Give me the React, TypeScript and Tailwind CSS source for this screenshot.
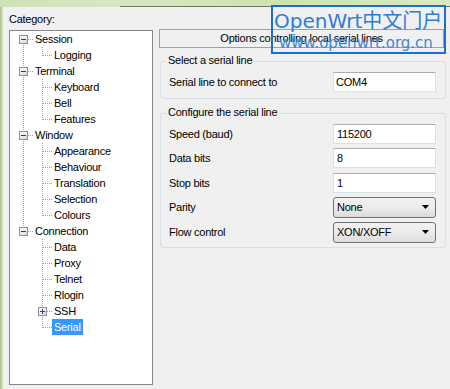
import React from 'react';

type Node = { label: string; level: 0 | 1; expander?: '-' | '+'; selected?: boolean };

const tree: Node[] = [
    { label: 'Session', level: 0, expander: '-' },
    { label: 'Logging', level: 1 },
    { label: 'Terminal', level: 0, expander: '-' },
    { label: 'Keyboard', level: 1 },
    { label: 'Bell', level: 1 },
    { label: 'Features', level: 1 },
    { label: 'Window', level: 0, expander: '-' },
    { label: 'Appearance', level: 1 },
    { label: 'Behaviour', level: 1 },
    { label: 'Translation', level: 1 },
    { label: 'Selection', level: 1 },
    { label: 'Colours', level: 1 },
    { label: 'Connection', level: 0, expander: '-' },
    { label: 'Data', level: 1 },
    { label: 'Proxy', level: 1 },
    { label: 'Telnet', level: 1 },
    { label: 'Rlogin', level: 1 },
    { label: 'SSH', level: 1, expander: '+' },
    { label: 'Serial', level: 1, selected: true },
];

const rows = [
    { label: 'Speed (baud)', value: '115200', kind: 'input', gap: 'mt-0' },
    { label: 'Data bits', value: '8', kind: 'input', gap: 'mt-[4px]' },
    { label: 'Stop bits', value: '1', kind: 'input', gap: 'mt-[5px]' },
    { label: 'Parity', value: 'None', kind: 'select', gap: 'mt-[4px]' },
    { label: 'Flow control', value: 'XON/XOFF', kind: 'select', gap: 'mt-[4px]' },
];

// centre of a tree row, relative to the list box content
const cy = (i: number) => 8 + 16 * i;

function TreeLines() {
    const dot = { stroke: '#a0a0a0', strokeDasharray: '1 1', shapeRendering: 'crispEdges' as const };
    const groups = [
        { parent: 0, last: 1 },
        { parent: 2, last: 5 },
        { parent: 6, last: 11 },
        { parent: 12, last: 18 },
    ];
    return (
        <svg className="absolute left-0 top-0" width={142} height={353}>
            <defs>
                <linearGradient id="box" x1="0" y1="0" x2="1" y2="1">
                    <stop offset="0" stopColor="#ffffff" />
                    <stop offset="1" stopColor="#d8d8d8" />
                </linearGradient>
            </defs>
            {/* top-level spine */}
            <line x1={13.5} y1={cy(0)} x2={13.5} y2={cy(12)} {...dot} />
            {groups.map(g => (
                <line key={g.parent} x1={32.5} y1={cy(g.parent) + 8} x2={32.5} y2={cy(g.last) + 1} {...dot} />
            ))}
            {tree.map((n, i) => {
                const y = cy(i) + 0.5;
                if (n.level === 0) {
                    return (
                        <g key={n.label}>
                            <line x1={18} y1={y} x2={24} y2={y} {...dot} />
                            <rect x={9.5} y={y - 4} width={8} height={8} fill="url(#box)" stroke="#919191" shapeRendering="crispEdges" />
                            <line x1={11} y1={y} x2={16} y2={y} stroke="#2c3f66" shapeRendering="crispEdges" />
                        </g>
                    );
                }
                return (
                    <g key={n.label}>
                        <line x1={n.expander ? 37 : 33} y1={y} x2={42} y2={y} {...dot} />
                        {n.expander && (
                            <>
                                <rect x={28.5} y={y - 4} width={8} height={8} fill="url(#box)" stroke="#919191" shapeRendering="crispEdges" />
                                <line x1={30} y1={y} x2={35} y2={y} stroke="#2c4a8a" shapeRendering="crispEdges" />
                                <line x1={32.5} y1={y - 2.5} x2={32.5} y2={y + 2.5} stroke="#2c4a8a" shapeRendering="crispEdges" />
                            </>
                        )}
                    </g>
                );
            })}
        </svg>
    );
}

function ComboArrow() {
    return (
        <svg width={8} height={5} viewBox="0 0 8 5">
            <path d="M0 0 H7 L3.5 4 Z" fill="#000" />
        </svg>
    );
}

export default function App() {
    return (
        <div className="w-[450px] h-[389px] bg-[#f0f0f0] relative overflow-hidden font-['Liberation_Sans',Arial,sans-serif] text-[11px] tracking-[-0.25px] text-black">
            {/* title bar edge */}
            <div className="flex h-[7px]">
                <div className="w-[120px] bg-gradient-to-r from-[#cfe2b6] to-[#d6e8c1]" />
                <div className="flex-1 bg-gradient-to-r from-[#d6e8c1] via-[#cde3b2] to-[#d8eac4] border-b border-[#6e7b62]" />
            </div>

            <div className="flex h-[382px]">
                <div className="w-[3px] bg-gradient-to-r from-[#a7bf86] to-[#dbe7cc]" />

                {/* category tree */}
                <div className="ml-[6px] w-[144px] flex flex-col">
                    <div className="h-[23px] pt-[6px] leading-[13px]">Category:</div>
                    <div className="relative h-[355px] bg-white border border-[#828790]">
                        <TreeLines />
                        <div className="relative flex flex-col">
                            {tree.map(n => (
                                <div key={n.label} className="h-[16px] flex">
                                    <span
                                        className={
                                            (n.level === 0 ? 'ml-[23px] ' : 'ml-[42px] ') +
                                            'px-[2px] leading-[16px] ' +
                                            (n.selected ? 'bg-[#3399ff] text-white' : '')
                                        }
                                    >
                                        {n.label}
                                    </span>
                                </div>
                            ))}
                        </div>
                    </div>
                </div>

                {/* options panel */}
                <div className="ml-[6px] w-[287px] flex flex-col">
                    <div className="mt-[22px] h-[19px] w-[285px] border border-[#a0a0a0] flex items-center justify-center leading-[13px]">
                        Options controlling local serial lines
                    </div>

                    <div className="relative mt-[13px] ml-[1px] w-[286px] h-[38px] border border-[#d5dfe5] rounded-[3px]">
                        <span className="absolute -top-[8px] left-[5px] px-[2px] bg-[#f0f0f0] leading-[13px]">Select a serial line</span>
                        <div className="flex items-center justify-between pt-[10px] pl-[8px] pr-[9px]">
                            <span>Serial line to connect to</span>
                            <div className="w-[103px] h-[20px] bg-white border border-[#dbdfe6] border-t-[#abadb3] flex items-center pl-[2px]">COM4</div>
                        </div>
                    </div>

                    <div className="relative mt-[14px] ml-[1px] w-[286px] h-[135px] border border-[#d5dfe5] rounded-[3px]">
                        <span className="absolute -top-[8px] left-[5px] px-[2px] bg-[#f0f0f0] leading-[13px]">Configure the serial line</span>
                        <div className="flex flex-col pt-[10px] pl-[8px] pr-[9px]">
                            {rows.map(r => (
                                <div key={r.label} className={'flex items-center justify-between ' + r.gap}>
                                    <span>{r.label}</span>
                                    {r.kind === 'input' ? (
                                        <div className="w-[103px] h-[20px] bg-white border border-[#dbdfe6] border-t-[#abadb3] flex items-center pl-[3px]">{r.value}</div>
                                    ) : (
                                        <div className="w-[103px] h-[21px] rounded-[3px] border border-[#707070] bg-gradient-to-b from-[#f2f2f2] via-[#ebebeb] to-[#dcdcdc] flex items-center justify-between pl-[3px] pr-[5px]">
                                            <span>{r.value}</span>
                                            <ComboArrow />
                                        </div>
                                    )}
                                </div>
                            ))}
                        </div>
                    </div>
                </div>
            </div>

            {/* site watermark */}
            <div className="absolute left-[271px] top-[5px] w-[175px] h-[49px] border-2 border-[#1b6fd0] flex flex-col tracking-normal text-[#2f7bd6]">
                <div className="h-[29px] pt-[2px] pl-[1px] text-[20px] leading-[24px] font-['DejaVu_Sans','Noto_Sans_CJK_SC',sans-serif] whitespace-nowrap">OpenWrt中文门户</div>
                <div className="pl-[6px] text-[15px] leading-[15px] font-['DejaVu_Sans',sans-serif] text-[#3d86da] whitespace-nowrap">www.openwrt.org.cn</div>
            </div>
        </div>
    );
}
